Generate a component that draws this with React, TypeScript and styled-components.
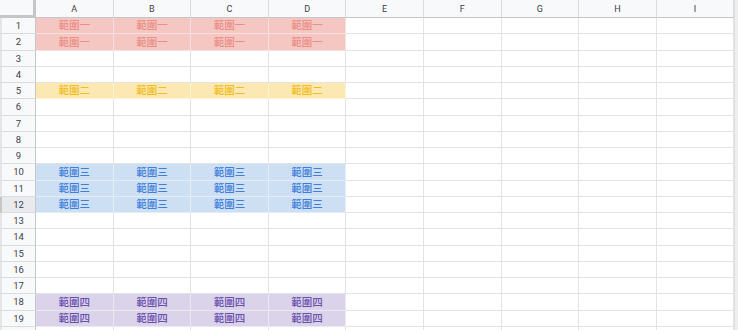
import styled, { createGlobalStyle, css } from 'styled-components';

type Tone = 'red' | 'yellow' | 'blue' | 'purple' | 'none';

const COLUMNS = ['A', 'B', 'C', 'D', 'E', 'F', 'G', 'H', 'I'];
const ROW_COUNT = 19;
const SELECTED_ROW = 12;

const RANGES: { rows: number[]; tone: Tone; label: string }[] = [
  { rows: [1, 2], tone: 'red', label: '範圍一' },
  { rows: [5], tone: 'yellow', label: '範圍二' },
  { rows: [10, 11, 12], tone: 'blue', label: '範圍三' },
  { rows: [18, 19], tone: 'purple', label: '範圍四' },
];

const TONES: Record<Tone, { fill: string; text: string }> = {
  red: { fill: '#f4c7c3', text: '#ea8e86' },
  yellow: { fill: '#fce8b2', text: '#f2bd1c' },
  blue: { fill: '#cddff2', text: '#3f7fdc' },
  purple: { fill: '#dbd3ea', text: '#6a50ad' },
  none: { fill: '#ffffff', text: '#222222' },
};

function rangeFor(row: number) {
  return RANGES.find((range) => range.rows.includes(row));
}

function App() {
  const rows = Array.from({ length: ROW_COUNT }, (_, i) => i + 1);

  return (
    <>
      <GlobalStyle />
      <StyledSheet>
        <StyledCorner />
        {COLUMNS.map((col) => (
          <StyledColHeader key={col}>{col}</StyledColHeader>
        ))}
        <StyledGutter />

        {rows.map((row) => {
          const range = rangeFor(row);
          return (
            <StyledRow key={row}>
              <StyledRowHeader $selected={row === SELECTED_ROW}>{row}</StyledRowHeader>
              {COLUMNS.map((col, index) => {
                const inRange = range && index < 4;
                return (
                  <StyledCell key={col} $tone={inRange ? range.tone : 'none'}>
                    {inRange ? range.label : ''}
                  </StyledCell>
                );
              })}
              <StyledGutter />
            </StyledRow>
          );
        })}

        {/* row 20 peeks in under the bottom edge, nothing readable in it */}
        <StyledRow>
          <StyledRowHeader $selected={false} />
          {COLUMNS.map((col) => (
            <StyledCell key={col} $tone="none" />
          ))}
          <StyledGutter />
        </StyledRow>
      </StyledSheet>
    </>
  );
}

export default App;

const GlobalStyle = createGlobalStyle`
  html, body {
    margin: 0;
    padding: 0;
    background: #ffffff;
    overflow: hidden;
  }
`;

const StyledSheet = styled.div`
  width: 740px;
  height: 330px;
  overflow: hidden;

  display: grid;
  grid-template-columns: 36px repeat(9, 77.6px) 1fr;
  grid-template-rows: 18px repeat(${ROW_COUNT + 1}, 16.25px);

  font-family: Roboto, 'Noto Sans CJK TC', sans-serif;
`;

const StyledRow = styled.div`
  display: contents;
`;

const StyledCorner = styled.div`
  box-sizing: border-box;
  background: #f8f9fa;
  border-right: 3px solid #c4c7c5;
  border-bottom: 3px solid #c4c7c5;
`;

const StyledColHeader = styled.div`
  box-sizing: border-box;
  background: #f8f9fa;
  border-right: 1px solid #dadce0;
  border-bottom: 1px solid #c4c7c5;

  display: flex;
  align-items: center;
  justify-content: center;

  font-size: 9px;
  color: #3c4043;
`;

const StyledRowHeader = styled.div<{ $selected: boolean }>`
  box-sizing: border-box;
  background: ${({ $selected }) => ($selected ? '#e8eaed' : '#f8f9fa')};
  border-left: 2px solid ${({ $selected }) => ($selected ? '#c4c7c5' : '#e3e5e8')};
  border-right: 1px solid #c4c7c5;
  border-bottom: 1px solid #dadce0;

  display: flex;
  align-items: center;
  justify-content: center;

  font-size: 9.5px;
  color: #3c4043;
`;

const StyledCell = styled.div<{ $tone: Tone }>`
  box-sizing: border-box;
  border-right: 1px solid #e2e3e3;
  border-bottom: 1px solid #e2e3e3;

  display: flex;
  align-items: center;
  justify-content: center;

  font-family: 'Noto Sans CJK TC', sans-serif;
  font-size: 10.5px;
  font-weight: 500;
  line-height: 1;

  ${({ $tone }) => css`
    background: ${TONES[$tone].fill};
    color: ${TONES[$tone].text};
  `}

  ${({ $tone }) =>
    $tone !== 'none' &&
    css`
      border-right-color: rgba(255, 255, 255, 0.45);
      border-bottom-color: rgba(255, 255, 255, 0.45);
    `}
`;

const StyledGutter = styled.div`
  box-sizing: border-box;
  width: 4px;
  background: #eeeeee;
  border-left: 1px solid #e0e0e0;
`;
